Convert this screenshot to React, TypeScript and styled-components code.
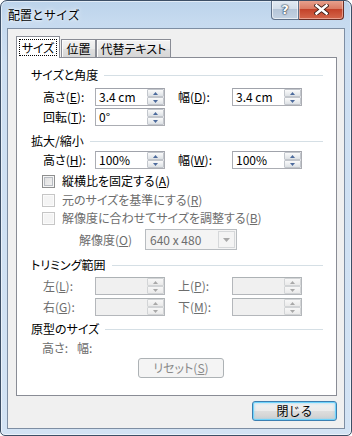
import React from 'react';
import styled, { createGlobalStyle, css } from 'styled-components';

const Global = createGlobalStyle`
  html, body { margin: 0; padding: 0; width: 352px; height: 436px; overflow: hidden; background: #ffffff; }
  body {
    font-family: "Noto Sans CJK JP", "Noto Sans", sans-serif;
    font-size: 12px;
    color: #000;
  }
  * { box-sizing: border-box; }
`;

const Window = styled.div`
  width: 352px;
  height: 436px;
  border: 1px solid #3d4f66;
  border-radius: 7px 7px 5px 5px;
  background: linear-gradient(180deg, #bcd3eb 0px, #c6daef 20px, #cddff2 60px, #d3e3f4 100%);
  box-shadow: inset 0 0 0 1px rgba(255, 255, 255, 0.55);
  padding: 0 6px 6px 6px;
  display: flex;
  flex-direction: column;
  overflow: hidden;
`;

const TitleBar = styled.div`
  height: 27px;
  display: flex;
  align-items: flex-start;
  justify-content: space-between;
  padding-left: 1px;
`;

const TitleText = styled.div`
  font-family: "Noto Sans CJK JP", sans-serif;
  font-size: 12px;
  line-height: 14px;
  margin-top: 7px;
  color: #000;
  text-shadow: 0 0 6px rgba(255, 255, 255, 0.9), 0 0 3px rgba(255, 255, 255, 0.9);
`;

const CaptionGroup = styled.div`
  display: flex;
  margin-top: -1px;
  margin-right: 1px;
`;

const CaptionButton = styled.div<{ $kind: 'help' | 'close' }>`
  height: 20px;
  display: flex;
  align-items: center;
  justify-content: center;
  border: 1px solid;
  border-top: none;
  ${p =>
    p.$kind === 'help'
      ? css`
          width: 28px;
          border-color: #5f7189;
          border-radius: 0 0 0 4px;
          background: linear-gradient(180deg, #e3ebf4 0%, #d3deea 45%, #b5c5d8 50%, #c3d2e2 100%);
          box-shadow: inset 0 0 0 1px rgba(255, 255, 255, 0.6);
        `
      : css`
          width: 45px;
          border-color: #6a2e25;
          border-left: none;
          border-radius: 0 0 4px 0;
          background: linear-gradient(180deg, #e9a592 0%, #db7c64 45%, #c4432a 50%, #d4674c 100%);
          box-shadow: inset 0 0 0 1px rgba(255, 220, 210, 0.5);
        `}
`;

const HelpGlyph = styled.span`
  font-family: "DejaVu Sans", sans-serif;
  font-weight: bold;
  font-size: 13px;
  line-height: 14px;
  color: #ffffff;
  text-shadow: 0 0 1px #2b3a4d, 0 0 1px #2b3a4d, 0 0 2px #2b3a4d;
`;

const Client = styled.div`
  flex: 1;
  border: 1px solid #7e8ea3;
  background: #f0f0f0;
  padding: 7px 7px 0 8px;
  display: flex;
  flex-direction: column;
`;

const TabStrip = styled.div`
  height: 22px;
  display: flex;
  align-items: flex-end;
  margin-bottom: -1px;
  position: relative;
  z-index: 1;
`;

const Tab = styled.div<{ $active?: boolean; $w: number; $ml?: number }>`
  width: ${p => p.$w}px;
  margin-left: ${p => p.$ml ?? 0}px;
  border: 1px solid #898c95;
  border-bottom: none;
  display: flex;
  align-items: center;
  justify-content: center;
  font-size: 12px;
  line-height: 14px;
  font-feature-settings: "palt" 1;
  ${p =>
    p.$active
      ? css`
          height: 22px;
          background: #ffffff;
          padding: 2px 2px 2px 2px;
        `
      : css`
          height: 18px;
          margin-bottom: 1px;
          padding-top: 1px;
          background: linear-gradient(180deg, #f3f3f3 0%, #ebebeb 50%, #e0e0e0 51%, #d6d6d6 100%);
          box-shadow: inset 1px 1px 0 #fbfbfb;
        `}
`;

const FocusRing = styled.div`
  flex: 1;
  align-self: stretch;
  border: 1px dotted #000;
  display: flex;
  align-items: center;
  justify-content: center;
`;

const Panel = styled.div`
  height: 339px;
  border: 1px solid #898c95;
  background: #ffffff;
  display: flex;
  flex-direction: column;
  padding: 0 13px 0 0;
  font-feature-settings: "palt" 1;
`;

const SectionHeader = styled.div<{ $mt: number }>`
  margin-top: ${p => p.$mt}px;
  margin-left: 14px;
  height: 14px;
  display: flex;
  align-items: center;
  line-height: 14px;
  color: #000;
`;

const Rule = styled.div`
  flex: 1;
  height: 1px;
  margin-left: 6px;
  background: #d5dfe5;
`;

const FieldRow = styled.div<{ $mt: number }>`
  margin-top: ${p => p.$mt}px;
  margin-left: 26px;
  height: 18px;
  display: grid;
  grid-template-columns: 52px 70px 13px 54px 70px;
  align-items: center;
`;

const Label = styled.span<{ $disabled?: boolean; $col?: number }>`
  line-height: 14px;
  white-space: nowrap;
  color: ${p => (p.$disabled ? '#6d6d6d' : '#000')};
  grid-column: ${p => p.$col ?? 'auto'};
  u { text-underline-offset: 1px; }
`;

const SpinBox = styled.div<{ $disabled?: boolean }>`
  height: 18px;
  display: flex;
  border: 1px solid ${p => (p.$disabled ? '#b4b7bb' : '#abadb3')};
  border-top-color: ${p => (p.$disabled ? '#adb2b5' : '#a0a3ab')};
  background: ${p => (p.$disabled ? '#f0f0f0' : '#ffffff')};
`;

const SpinText = styled.div`
  flex: 1;
  padding-left: 3px;
  line-height: 16px;
  font-family: "Noto Sans CJK JP", sans-serif;
  white-space: nowrap;
  overflow: hidden;
`;

const Spinner = styled.div`
  width: 17px;
  display: flex;
  flex-direction: column;
`;

const SpinBtn = styled.div<{ $disabled?: boolean }>`
  height: 8px;
  display: flex;
  align-items: center;
  justify-content: center;
  border: 1px solid ${p => (p.$disabled ? '#d2d4d6' : '#c2c6cc')};
  border-radius: 1px;
  background: ${p =>
    p.$disabled
      ? 'linear-gradient(180deg, #f7f7f7, #eaeaea)'
      : 'linear-gradient(180deg, #fafafa 0%, #eceef0 50%, #dde1e5 100%)'};
`;

const CheckRow = styled.div<{ $mt: number; $disabled?: boolean }>`
  margin-top: ${p => p.$mt}px;
  margin-left: 25px;
  height: 18px;
  display: flex;
  align-items: center;
  gap: 7px;
  line-height: 14px;
  white-space: nowrap;
  color: ${p => (p.$disabled ? '#6d6d6d' : '#000')};
  u { text-underline-offset: 1px; }
`;

const CheckBox = styled.div<{ $disabled?: boolean }>`
  width: 13px;
  height: 13px;
  flex: none;
  border: 1px solid ${p => (p.$disabled ? '#c6c6c6' : '#8e8f8f')};
  background: ${p => (p.$disabled ? '#f4f4f4' : 'linear-gradient(135deg, #dcdcdc, #f4f4f4)')};
  box-shadow: ${p =>
    p.$disabled
      ? 'inset 0 0 0 1px #fbfbfb'
      : 'inset 0 0 0 1px #f6f6f6, inset 0 0 0 2px #b8bcc2'};
`;

const ResRow = styled.div<{ $mt: number }>`
  margin-top: ${p => p.$mt}px;
  margin-left: 62px;
  height: 21px;
  display: flex;
  align-items: center;
`;

const ResLabel = styled.span`
  width: 66px;
  line-height: 14px;
  color: #6d6d6d;
  u { text-underline-offset: 1px; }
`;

const Combo = styled.div`
  width: 92px;
  height: 21px;
  display: flex;
  border: 1px solid #b8bcc0;
  background: #f4f4f4;
  color: #6d6d6d;
`;

const ComboText = styled.div`
  flex: 1;
  padding-left: 4px;
  line-height: 19px;
`;

const ComboArrow = styled.div`
  width: 17px;
  margin: 1px;
  border: 1px solid #d6d8da;
  background: #f4f4f4;
  display: flex;
  align-items: center;
  justify-content: center;
`;

const OrigRow = styled.div<{ $mt: number }>`
  margin-top: ${p => p.$mt}px;
  margin-left: 25px;
  height: 14px;
  display: flex;
  align-items: center;
  line-height: 14px;
  color: #6d6d6d;
`;

const OrigLabel = styled.span`
  width: 35px;
`;

const ResetButton = styled.div<{ $mt: number }>`
  margin-top: ${p => p.$mt}px;
  margin-left: 121px;
  width: 86px;
  height: 20px;
  border: 1px solid #adb2b5;
  border-radius: 3px;
  background: #f4f4f4;
  color: #8a8a8a;
  display: flex;
  align-items: center;
  justify-content: center;
  line-height: 14px;
  u { text-underline-offset: 1px; }
`;

const Footer = styled.div`
  margin-top: 5px;
  display: flex;
  justify-content: flex-end;
`;

const CloseButton = styled.div`
  width: 85px;
  height: 20px;
  border: 1px solid #3c7fb1;
  border-radius: 3px;
  display: flex;
  align-items: center;
  justify-content: center;
  line-height: 14px;
  color: #000;
  background: linear-gradient(180deg, #f2f2f2 0%, #ebebeb 48%, #dddddd 52%, #cfcfcf 100%);
  box-shadow: inset 0 0 0 1px #6fd3fb, inset 0 0 2px 2px rgba(130, 210, 245, 0.35);
`;

const Arrow = ({ up, color }: { up?: boolean; color: string }) => (
  <svg width="5" height="3" viewBox="0 0 5 3">
    <polygon points={up ? '0,3 2.5,0 5,3' : '0,0 2.5,3 5,0'} fill={color} />
  </svg>
);

const Spin = ({ value, disabled }: { value?: string; disabled?: boolean }) => {
  const c = disabled ? '#a8a8a8' : '#4c6a9c';
  return (
    <SpinBox $disabled={disabled}>
      <SpinText>{value}</SpinText>
      <Spinner>
        <SpinBtn $disabled={disabled}>
          <Arrow up color={c} />
        </SpinBtn>
        <SpinBtn $disabled={disabled}>
          <Arrow color={c} />
        </SpinBtn>
      </Spinner>
    </SpinBox>
  );
};

export default function App() {
  return (
    <>
      <Global />
      <Window>
        <TitleBar>
          <TitleText>配置とサイズ</TitleText>
          <CaptionGroup>
            <CaptionButton $kind="help">
              <HelpGlyph>?</HelpGlyph>
            </CaptionButton>
            <CaptionButton $kind="close">
              <svg width="15" height="11" viewBox="0 0 15 11">
                <path d="M2.5 1.5 L12.5 9.5 M12.5 1.5 L2.5 9.5" stroke="#3a1a14" strokeWidth="4.2" strokeLinecap="square" />
                <path d="M2.5 1.5 L12.5 9.5 M12.5 1.5 L2.5 9.5" stroke="#ffffff" strokeWidth="2.6" strokeLinecap="square" />
              </svg>
            </CaptionButton>
          </CaptionGroup>
        </TitleBar>
        <Client>
          <TabStrip>
            <Tab $active $w={44}>
              <FocusRing>サイズ</FocusRing>
            </Tab>
            <Tab $w={35} $ml={1}>位置</Tab>
            <Tab $w={75}>代替テキスト</Tab>
          </TabStrip>
          <Panel>
            <SectionHeader $mt={10}>
              サイズと角度
              <Rule />
            </SectionHeader>
            <FieldRow $mt={6}>
              <Label>
                高さ(<u>E</u>):
              </Label>
              <Spin value="3.4 cm" />
              <Label $col={4}>
                幅(<u>D</u>):
              </Label>
              <Spin value="3.4 cm" />
            </FieldRow>
            <FieldRow $mt={2}>
              <Label>
                回転(<u>T</u>):
              </Label>
              <Spin value="0°" />
            </FieldRow>
            <SectionHeader $mt={8}>
              拡大/縮小
              <Rule />
            </SectionHeader>
            <FieldRow $mt={3}>
              <Label>
                高さ(<u>H</u>):
              </Label>
              <Spin value="100%" />
              <Label $col={4}>
                幅(<u>W</u>):
              </Label>
              <Spin value="100%" />
            </FieldRow>
            <CheckRow $mt={3}>
              <CheckBox />
              <span>
                縦横比を固定する(<u>A</u>)
              </span>
            </CheckRow>
            <CheckRow $mt={1} $disabled>
              <CheckBox $disabled />
              <span>
                元のサイズを基準にする(<u>R</u>)
              </span>
            </CheckRow>
            <CheckRow $mt={0} $disabled>
              <CheckBox $disabled />
              <span>
                解像度に合わせてサイズを調整する(<u>B</u>)
              </span>
            </CheckRow>
            <ResRow $mt={2}>
              <ResLabel>
                解像度(<u>O</u>)
              </ResLabel>
              <Combo>
                <ComboText>640 x 480</ComboText>
                <ComboArrow>
                  <svg width="7" height="4" viewBox="0 0 7 4">
                    <polygon points="0,0 3.5,4 7,0" fill="#a8a8a8" />
                  </svg>
                </ComboArrow>
              </Combo>
            </ResRow>
            <SectionHeader $mt={8}>
              トリミング範囲
              <Rule />
            </SectionHeader>
            <FieldRow $mt={5}>
              <Label $disabled>
                左(<u>L</u>):
              </Label>
              <Spin disabled />
              <Label $disabled $col={4}>
                上(<u>P</u>):
              </Label>
              <Spin disabled />
            </FieldRow>
            <FieldRow $mt={3}>
              <Label $disabled>
                右(<u>G</u>):
              </Label>
              <Spin disabled />
              <Label $disabled $col={4}>
                下(<u>M</u>):
              </Label>
              <Spin disabled />
            </FieldRow>
            <SectionHeader $mt={6}>
              原型のサイズ
              <Rule />
            </SectionHeader>
            <OrigRow $mt={5}>
              <OrigLabel>高さ:</OrigLabel>
              <span>幅:</span>
            </OrigRow>
            <ResetButton $mt={3}>
              リセット(<u>S</u>)
            </ResetButton>
          </Panel>
          <Footer>
            <CloseButton>閉じる</CloseButton>
          </Footer>
        </Client>
      </Window>
    </>
  );
}
